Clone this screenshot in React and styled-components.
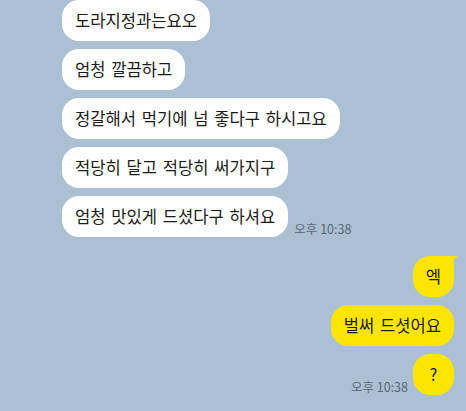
import React from "react";
import styled, { createGlobalStyle, css } from "styled-components";

const Global = createGlobalStyle`
  html, body { margin: 0; padding: 0; }
  body {
    background: #abc1d3;
    font-family: "Noto Sans CJK KR", "Noto Sans", sans-serif;
  }
`;

const Chat = styled.div`
  width: 466px;
  height: 411px;
  overflow: hidden;
  display: flex;
  flex-direction: column;
  gap: 19px;
  background: #abc1d3;
`;

const Group = styled.div`
  display: flex;
  flex-direction: column;
  gap: 8px;
  ${(p) =>
    p.$mine
      ? css`
          align-items: flex-end;
          padding-right: 12px;
        `
      : css`
          align-items: flex-start;
          padding-left: 62px;
        `}
`;

const Row = styled.div`
  display: flex;
  align-items: flex-end;
  gap: ${(p) => (p.$mine ? "5px" : "6px")};
  flex-direction: ${(p) => (p.$mine ? "row-reverse" : "row")};
`;

const Bubble = styled.div`
  position: relative;
  box-sizing: border-box;
  min-width: 41px;
  padding: 10px 13px;
  font-size: 16.6px;
  line-height: 21px;
  color: #1b1b1b;
  word-spacing: 2px;
  white-space: nowrap;
  text-align: center;
  border-radius: 17px;
  background: ${(p) => (p.$mine ? "#fde500" : "#ffffff")};
  ${(p) =>
    p.$tail &&
    css`
      border-top-right-radius: 6px;
    `}
`;

const Tail = styled.svg`
  position: absolute;
  top: 0;
  right: -4px;
  width: 12px;
  height: 10px;
  overflow: visible;
`;

const Time = styled.span`
  font-size: 12.5px;
  line-height: 14px;
  color: #57687a;
  white-space: nowrap;
  padding-bottom: 1px;
`;

const left = [
  "도라지정과는요오",
  "엄청 깔끔하고",
  "정갈해서 먹기에 넘 좋다구 하시고요",
  "적당히 달고 적당히 써가지구",
  "엄청 맛있게 드셨다구 하셔요",
];

const right = ["엑", "벌써 드셧어요", "?"];

function Message({ text, mine, time, tail }) {
  return (
    <Row $mine={mine}>
      <Bubble $mine={mine} $tail={tail}>
        {text}
        {tail && (
          <Tail viewBox="0 0 12 10">
            <path d="M0 0 L12 0 Q7 3 4 10 Z" fill="#fde500" />
          </Tail>
        )}
      </Bubble>
      {time && <Time>{time}</Time>}
    </Row>
  );
}

export default function App() {
  return (
    <>
      <Global />
      <Chat>
        <Group>
          {left.map((t, i) => (
            <Message key={i} text={t} time={i === left.length - 1 ? "오후 10:38" : null} />
          ))}
        </Group>
        <Group $mine>
          {right.map((t, i) => (
            <Message
              key={i}
              text={t}
              mine
              tail={i === 0}
              time={i === right.length - 1 ? "오후 10:38" : null}
            />
          ))}
        </Group>
      </Chat>
    </>
  );
}
